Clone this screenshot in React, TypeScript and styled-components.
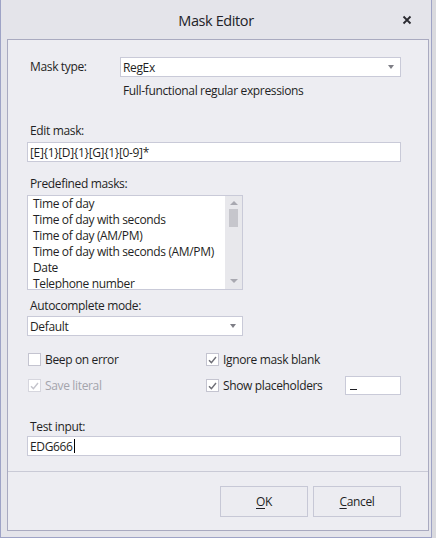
import React from "react";
import styled, { createGlobalStyle } from "styled-components";

const Global = createGlobalStyle`
  html, body { margin: 0; padding: 0; }
  body {
    width: 436px; height: 538px; overflow: hidden;
    background: #dadade;
    font-family: "Open Sans", "Noto Sans", sans-serif;
    font-size: 12px;
    letter-spacing: -0.35px;
    color: #1f1f24;
  }
`;

const Window = styled.div`
  width: 430px;
  height: 537px;
  background: #e4e4ea;
  border: 1px solid #9ea3c6;
  border-top: none;
  display: flex;
  flex-direction: column;
`;

const TitleBar = styled.div`
  height: 39px;
  display: flex;
  align-items: center;
  justify-content: center;
  position: relative;
  font-size: 14.5px;
  letter-spacing: -0.4px;
  color: #222228;
  padding-top: 1px;
  box-sizing: border-box;
`;

const CloseBtn = styled.div`
  position: absolute;
  right: 19px;
  top: 15px;
  width: 10px;
  height: 10px;
  display: flex;
`;

const Body = styled.div`
  flex: 1;
  padding: 0 2px 6px 6px;
  display: flex;
`;

const Panel = styled.div`
  flex: 1;
  background: #ededf2;
  border: 1px solid #a9aac0;
  display: flex;
  flex-direction: column;
`;

const Content = styled.div`
  padding: 17px 27px 0 19px;
  display: flex;
  flex-direction: column;
`;

const TypeRow = styled.div`
  display: grid;
  grid-template-columns: 93px 1fr;
  align-items: start;
`;

const Label = styled.div<{ $mt?: number; $disabled?: boolean }>`
  margin-top: ${(p) => p.$mt ?? 0}px;
  padding-left: 3px;
  height: 16px;
  line-height: 16px;
  white-space: nowrap;
  color: ${(p) => (p.$disabled ? "#a4a4ac" : "#1f1f24")};
`;

const Desc = styled.div`
  margin: 6px 0 0 96px;
  height: 16px;
  line-height: 16px;
`;

const Field = styled.div<{ $w?: number; $mt?: number }>`
  box-sizing: border-box;
  height: 20px;
  width: ${(p) => (p.$w ? `${p.$w}px` : "auto")};
  margin-top: ${(p) => p.$mt ?? 0}px;
  background: #ffffff;
  border: 1px solid #c9cad8;
  display: flex;
  align-items: center;
  padding-left: 2px;
  position: relative;
  white-space: nowrap;
`;

const Arrow = styled.div`
  position: absolute;
  right: 6px;
  top: 7px;
  width: 0;
  height: 0;
  border-left: 3.5px solid transparent;
  border-right: 3.5px solid transparent;
  border-top: 4px solid #7e7e86;
`;

const ListBox = styled.div`
  box-sizing: border-box;
  width: 216px;
  height: 95px;
  margin-top: 3px;
  background: #fff;
  border: 1px solid #c9cad8;
  display: flex;
  overflow: hidden;
`;

const Items = styled.div`
  flex: 1;
  padding: 0 0 0 5px;
  overflow: hidden;
`;

const Item = styled.div`
  height: 16px;
  line-height: 16px;
  white-space: nowrap;
`;

const ScrollBar = styled.div`
  width: 17px;
  flex-shrink: 0;
  background: #e8e8ec;
  display: flex;
  flex-direction: column;
  align-items: center;
  padding-top: 5px;
  box-sizing: border-box;
`;

const ScrollArrow = styled.div<{ $up?: boolean }>`
  width: 0;
  height: 0;
  border-left: 4px solid transparent;
  border-right: 4px solid transparent;
  ${(p) =>
    p.$up
      ? "border-bottom: 4px solid #a8a8b0;"
      : "border-top: 4px solid #a8a8b0; margin-top: auto; margin-bottom: 6px;"}
`;

const Thumb = styled.div`
  width: 9px;
  height: 18px;
  margin-top: 4px;
  background: #c6c6cc;
`;

const Options = styled.div`
  margin-top: 14px;
  display: grid;
  grid-template-columns: 178px 1fr;
  row-gap: 7px;
  align-items: center;
`;

const CheckRow = styled.div`
  display: flex;
  align-items: center;
  height: 19px;
`;

const Box = styled.div<{ $disabled?: boolean }>`
  box-sizing: border-box;
  width: 13px;
  height: 13px;
  margin-left: 1px;
  margin-right: 4px;
  background: #fff;
  border: 1px solid ${(p) => (p.$disabled ? "#d6d6de" : "#c4c4d0")};
  display: flex;
  align-items: center;
  justify-content: center;
`;

const CheckText = styled.span<{ $disabled?: boolean }>`
  color: ${(p) => (p.$disabled ? "#a4a4ac" : "#1f1f24")};
  white-space: nowrap;
`;

const Placeholder = styled(Field)`
  margin-left: auto;
  height: 19px;
  width: 56px;
  align-items: flex-end;
  padding: 0 0 4px 4px;
`;

const Under = styled.div`
  width: 7px;
  height: 1px;
  background: #1f1f24;
`;

const Caret = styled.span`
  display: inline-block;
  width: 1px;
  height: 14px;
  background: #000;
  margin-left: 1px;
`;

const Separator = styled.div`
  margin-top: 15px;
  height: 1px;
  background: #c9cad6;
`;

const Footer = styled.div`
  display: flex;
  justify-content: flex-end;
  gap: 5px;
  padding: 14px 27px 0 0;
`;

const Button = styled.div`
  box-sizing: border-box;
  width: 88px;
  height: 31px;
  border: 1px solid #c7c8d6;
  background: #ececf1;
  display: flex;
  align-items: center;
  justify-content: center;
  u { text-decoration: underline; text-underline-offset: 2px; }
`;

function Check({ disabled }: { disabled?: boolean }) {
  return (
    <svg width="9" height="8" viewBox="0 0 9 8">
      <path
        d="M1 4.2 L3.4 6.6 L8 1"
        fill="none"
        stroke={disabled ? "#c4c4cc" : "#6e6e76"}
        strokeWidth="1.4"
      />
    </svg>
  );
}

const masks = [
  "Time of day",
  "Time of day with seconds",
  "Time of day (AM/PM)",
  "Time of day with seconds (AM/PM)",
  "Date",
  "Telephone number",
];

export default function App() {
  return (
    <>
      <Global />
      <Window>
        <TitleBar>
          Mask Editor
          <CloseBtn>
            <svg width="10" height="10" viewBox="0 0 10 10">
              <path d="M1.5 1.5 L8.5 8.5 M8.5 1.5 L1.5 8.5" stroke="#2a2a30" strokeWidth="1.8" />
            </svg>
          </CloseBtn>
        </TitleBar>
        <Body>
          <Panel>
            <Content>
              <TypeRow>
                <Label $mt={2}>Mask type:</Label>
                <Field>
                  RegEx
                  <Arrow />
                </Field>
              </TypeRow>
              <Desc>Full-functional regular expressions</Desc>
              <Label $mt={24}>Edit mask:</Label>
              <Field $mt={3}>[E]{"{1}"}[D]{"{1}"}[G]{"{1}"}[0-9]*</Field>
              <Label $mt={14}>Predefined masks:</Label>
              <ListBox>
                <Items>
                  {masks.map((m) => (
                    <Item key={m}>{m}</Item>
                  ))}
                </Items>
                <ScrollBar>
                  <ScrollArrow $up />
                  <Thumb />
                  <ScrollArrow />
                </ScrollBar>
              </ListBox>
              <Label $mt={8}>Autocomplete mode:</Label>
              <Field $w={216} $mt={2}>
                Default
                <Arrow />
              </Field>
              <Options>
                <CheckRow>
                  <Box />
                  <CheckText>Beep on error</CheckText>
                </CheckRow>
                <CheckRow>
                  <Box>
                    <Check />
                  </Box>
                  <CheckText>Ignore mask blank</CheckText>
                </CheckRow>
                <CheckRow>
                  <Box $disabled>
                    <Check disabled />
                  </Box>
                  <CheckText $disabled>Save literal</CheckText>
                </CheckRow>
                <CheckRow>
                  <Box>
                    <Check />
                  </Box>
                  <CheckText>Show placeholders</CheckText>
                  <Placeholder>
                    <Under />
                  </Placeholder>
                </CheckRow>
              </Options>
              <Label $mt={24}>Test input:</Label>
              <Field $mt={1}>
                EDG666
                <Caret />
              </Field>
            </Content>
            <Separator />
            <Footer>
              <Button>
                <span>
                  <u>O</u>K
                </span>
              </Button>
              <Button>
                <span>
                  <u>C</u>ancel
                </span>
              </Button>
            </Footer>
          </Panel>
        </Body>
      </Window>
    </>
  );
}
